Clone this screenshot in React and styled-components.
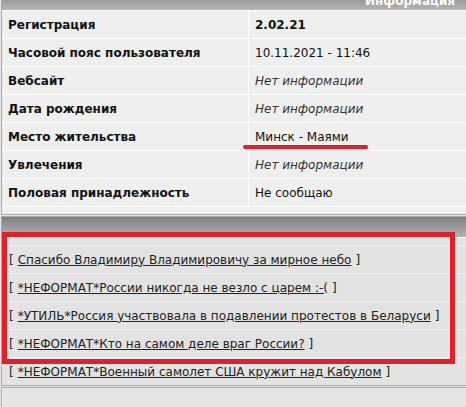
import React from "react";
import styled, { createGlobalStyle } from "styled-components";

const GlobalStyle = createGlobalStyle`
  html, body {
    margin: 0;
    padding: 0;
    background: #e6e6e6;
    overflow: hidden;
  }
  body {
    font-family: "DejaVu Sans", Verdana, sans-serif;
    font-size: 12px;
    color: #111;
  }
`;

const Page = styled.div`
  position: relative;
  overflow: hidden;
  width: 466px;
  height: 407px;
  padding-left: 1px;
  box-sizing: border-box;
`;

const Panel = styled.section`
  width: 472px;
  border: 1px solid #a9a9a9;
  background: #f0f0f0;
  padding: 0 1px;
  margin-top: ${(p) => p.$offset || 0}px;
  margin-bottom: 1px;
  box-sizing: border-box;
`;

const Header = styled.div`
  height: 20px;
  overflow: hidden;
  margin: 0 -1px;
  padding-right: 17px;
  background: linear-gradient(#7f7f7f, #b6b6b6);
  color: #fff;
  font-weight: bold;
  font-size: 12px;
  line-height: 23px;
  text-align: right;
  border-bottom: 1px solid #fff;
`;

const InfoGrid = styled.div`
  display: grid;
  grid-template-columns: 245px 1fr;
  column-gap: 1px;
  row-gap: 1px;
  background: #fff;
  border-bottom: 1px solid #fff;
`;

const Cell = styled.div`
  height: 27px;
  display: flex;
  align-items: center;
  padding-left: ${(p) => (p.$label ? 5 : 6)}px;
  background: #efefef;
  font-weight: ${(p) => (p.$label || p.$bold ? "bold" : "normal")};
  font-style: ${(p) => (p.$muted ? "italic" : "normal")};
  color: ${(p) => (p.$muted ? "#333" : "#111")};
`;

const Strip = styled.div`
  height: ${(p) => p.$h}px;
  background: ${(p) => p.$bg || "#efefef"};
`;

const LinkList = styled.div`
  display: flex;
  flex-direction: column;
  gap: 1px;
  background: #f4f4f4;
  margin: 0 -1px;
`;

const LinkRow = styled.div`
  height: 27px;
  display: flex;
  align-items: center;
  padding-left: 7px;
  background: #e3e3e3;
  color: #222;
`;

const TopicLink = styled.a`
  color: #222;
  text-decoration: underline;
  margin: 0 4px;
  cursor: pointer;
`;

const RedBox = styled.div`
  position: absolute;
  left: 2px;
  top: 232px;
  width: 453px;
  height: 132px;
  border: 5px solid #e2202a;
  box-sizing: border-box;
  pointer-events: none;
`;

const RedUnderline = styled.div`
  position: absolute;
  left: 243px;
  top: 145px;
  width: 125px;
  height: 4px;
  border-radius: 2px;
  background: #e2202a;
  pointer-events: none;
`;

const info = [
  { label: "Регистрация", value: "2.02.21", bold: true },
  { label: "Часовой пояс пользователя", value: "10.11.2021 - 11:46" },
  { label: "Вебсайт", value: "Нет информации", muted: true },
  { label: "Дата рождения", value: "Нет информации", muted: true },
  { label: "Место жительства", value: "Минск - Маями" },
  { label: "Увлечения", value: "Нет информации", muted: true },
  { label: "Половая принадлежность", value: "Не сообщаю" },
];

const topics = [
  "Спасибо Владимиру Владимировичу за мирное небо",
  "*НЕФОРМАТ*России никогда не везло с царем :-(",
  "*УТИЛЬ*Россия участвовала в подавлении протестов в Беларуси",
  "*НЕФОРМАТ*Кто на самом деле враг России?",
  "*НЕФОРМАТ*Военный самолет США кружит над Кабулом",
];

export default function App() {
  return (
    <>
      <GlobalStyle />
      <Page>
        <Panel $offset={-11}>
          <Header>Информация</Header>
          <InfoGrid>
            {info.map((row) => (
              <React.Fragment key={row.label}>
                <Cell $label>{row.label}</Cell>
                <Cell $bold={row.bold} $muted={row.muted}>
                  {row.value}
                </Cell>
              </React.Fragment>
            ))}
          </InfoGrid>
          <Strip $h={7} />
        </Panel>
        <Panel>
          <Header />
          <Strip $h={7} $bg="#e3e3e3" />
          <LinkList>
            <Strip $h={0} />
            {topics.map((t) => (
              <LinkRow key={t}>
                [<TopicLink>{t}</TopicLink>]
              </LinkRow>
            ))}
          </LinkList>
        </Panel>
        <Panel>
          <Strip $h={30} $bg="#e6e6e6" />
        </Panel>
        <RedUnderline />
        <RedBox />
      </Page>
    </>
  );
}
